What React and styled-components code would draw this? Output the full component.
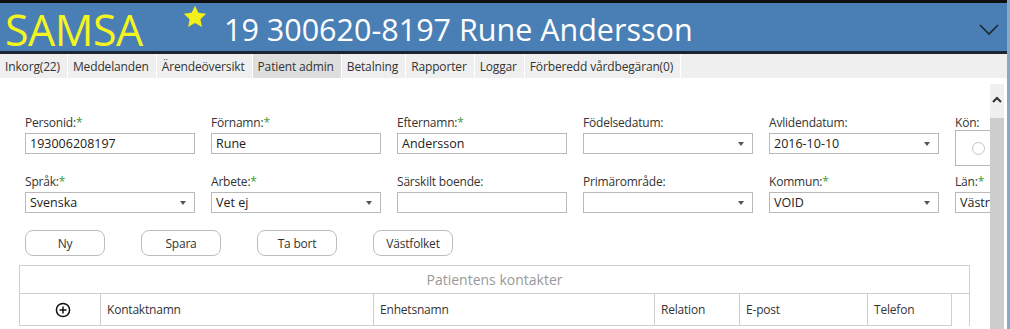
import React from 'react'
import styled, { createGlobalStyle } from 'styled-components'

const Global = createGlobalStyle`
  html, body { margin: 0; padding: 0; background: #fff; }
  body { font-family: "Open Sans", "Noto Sans", sans-serif; }
  * { box-sizing: border-box; }
`

const Frame = styled.div`
  width: 1010px;
  height: 329px;
  overflow: hidden;
  border-right: 3px solid #8aa7cc;
  display: flex;
  flex-direction: column;
`

const Header = styled.header`
  height: 54px;
  background: #4a7fb5;
  border-top: 3px solid #101010;
  border-bottom: 3px solid #1b2430;
  display: flex;
  align-items: center;
  padding-left: 5px;
  padding-right: 8px;
`

const Logo = styled.div`
  color: #f4f41e;
  font-family: "Open Sans", sans-serif;
  font-size: 43px;
  letter-spacing: -0.5px;
  line-height: 1;
  margin-top: 4px;
  width: 177px;
`

const Star = styled.svg`
  width: 26px;
  height: 26px;
  align-self: flex-start;
  margin-top: 1px;
  margin-right: 16px;
`

const PatientName = styled.div`
  color: #fff;
  font-family: "Open Sans", sans-serif;
  font-size: 30.5px;
  line-height: 1;
  margin-top: 4px;
  flex: 1;
`

const Chevron = styled.svg`
  width: 20px;
  height: 12px;
  margin-top: 6px;
`

const TabBar = styled.nav`
  height: 24px;
  background: #efefef;
  display: flex;
  align-items: stretch;
`

const Tab = styled.div`
  font-size: 12px;
  color: #333;
  padding: 0 7px 0 5px;
  display: flex;
  align-items: center;
  border-right: 1px solid #fff;
  letter-spacing: -0.15px;
  background: ${p => (p.$active ? '#dedede' : 'transparent')};
`

const Body = styled.div`
  flex: 1;
  display: flex;
  min-height: 0;
`

const Main = styled.main`
  flex: 1;
  overflow: hidden;
  padding: 36px 0 0 19px;
`

const ScrollBar = styled.div`
  width: 17px;
  margin-top: 6px;
  display: flex;
  flex-direction: column;
`

const ScrollUp = styled.div`
  height: 34px;
  width: 14px;
  background: #f0f0f0;
  display: flex;
  justify-content: center;
  padding-top: 12px;
`

const Thumb = styled.div`
  flex: 1;
  width: 14px;
  background: #cdcdcd;
`

const FormGrid = styled.div`
  display: grid;
  grid-template-columns: repeat(6, 170px);
  column-gap: 16px;
  row-gap: 19px;
  padding-left: 6px;
  width: 1100px;
`

const Field = styled.div`
  display: flex;
  flex-direction: column;
`

const Label = styled.label`
  font-size: 12px;
  color: #333;
  height: 17px;
  line-height: 17px;
  margin-bottom: 2px;
  letter-spacing: -0.2px;
`

const Req = styled.span`
  color: #3c9a3c;
`

const Input = styled.div`
  height: 21px;
  border: 1px solid #b9b9b9;
  background: #fff;
  font-size: 12.5px;
  color: #222;
  padding: 0 8px 0 4px;
  display: flex;
  align-items: center;
  justify-content: space-between;
  white-space: nowrap;
  overflow: hidden;
`

const Caret = styled.span`
  width: 0;
  height: 0;
  border-left: 3.5px solid transparent;
  border-right: 3.5px solid transparent;
  border-top: 4px solid #555;
`

const RadioBox = styled.div`
  height: 36px;
  margin-top: -3px;
  margin-bottom: -12px;
  border: 1px solid #b9b9b9;
  display: flex;
  align-items: center;
  padding-left: 16px;
`

const Radio = styled.span`
  width: 13px;
  height: 13px;
  border: 1.5px solid #c4c4c4;
  border-radius: 50%;
`

const Buttons = styled.div`
  display: flex;
  gap: 36px;
  padding-left: 6px;
  margin-top: 17px;
`

const Button = styled.button`
  width: 80px;
  height: 26px;
  border: 1px solid #bdbdbd;
  border-radius: 8px;
  background: #fff;
  font-family: inherit;
  font-size: 12px;
  color: #333;
  letter-spacing: -0.2px;
`

const Panel = styled.section`
  width: 951px;
  margin-top: 9px;
  border: 1px solid #cfcfcf;
  border-bottom: none;
`

const PanelTitle = styled.div`
  height: 28px;
  display: flex;
  align-items: center;
  justify-content: center;
  font-size: 14px;
  color: #999;
  border-bottom: 1px solid #cfcfcf;
`

const HeadRow = styled.div`
  display: grid;
  grid-template-columns: 80px 273px 281px 85px 128px 85px;
  width: 932px;
  height: 32px;
  border-bottom: 1px solid #cfcfcf;
  border-right: 1px solid #cfcfcf;
`

const HeadCell = styled.div`
  font-size: 12px;
  color: #333;
  display: flex;
  align-items: center;
  justify-content: ${p => (p.$center ? 'center' : 'flex-start')};
  padding-left: 6px;
  border-left: ${p => (p.$first ? 'none' : '1px solid #cfcfcf')};
  letter-spacing: -0.2px;
`

const fieldsRow1 = [
  { label: 'Personid:', req: true, value: '193006208197' },
  { label: 'Förnamn:', req: true, value: 'Rune' },
  { label: 'Efternamn:', req: true, value: 'Andersson' },
  { label: 'Födelsedatum:', value: '', select: true },
  { label: 'Avlidendatum:', value: '2016-10-10', select: true },
]

const fieldsRow2 = [
  { label: 'Språk:', req: true, value: 'Svenska', select: true },
  { label: 'Arbete:', req: true, value: 'Vet ej', select: true },
  { label: 'Särskilt boende:', value: '' },
  { label: 'Primärområde:', value: '', select: true },
  { label: 'Kommun:', req: true, value: 'VOID', select: true },
  { label: 'Län:', req: true, value: 'Västra Götaland' },
]

const tabs = ['Inkorg(22)', 'Meddelanden', 'Ärendeöversikt', 'Patient admin', 'Betalning', 'Rapporter', 'Loggar', 'Förberedd vårdbegäran(0)']

const renderField = f => (
  <Field key={f.label}>
    <Label>
      {f.label}
      {f.req && <Req>*</Req>}
    </Label>
    <Input>
      <span>{f.value}</span>
      {f.select && <Caret />}
    </Input>
  </Field>
)

export default function App() {
  return (
    <Frame>
      <Global />
      <Header>
        <Logo>SAMSA</Logo>
        <Star viewBox="0 0 24 24">
          <path d="M12 1.5l3.1 6.6 7.2.9-5.3 5 1.4 7.2L12 17.6l-6.4 3.6 1.4-7.2-5.3-5 7.2-.9z" fill="#f2ef1a" />
        </Star>
        <PatientName>19 300620-8197 Rune Andersson</PatientName>
        <Chevron viewBox="0 0 20 12">
          <path d="M1 1l9 9 9-9" fill="none" stroke="#1d2733" strokeWidth="1.6" />
        </Chevron>
      </Header>
      <TabBar>
        {tabs.map(t => (
          <Tab key={t} $active={t === 'Patient admin'}>{t}</Tab>
        ))}
      </TabBar>
      <Body>
        <Main>
          <FormGrid>
            {fieldsRow1.map(renderField)}
            <Field>
              <Label>Kön:</Label>
              <RadioBox>
                <Radio />
              </RadioBox>
            </Field>
            {fieldsRow2.map(renderField)}
          </FormGrid>
          <Buttons>
            <Button>Ny</Button>
            <Button>Spara</Button>
            <Button>Ta bort</Button>
            <Button>Västfolket</Button>
          </Buttons>
          <Panel>
            <PanelTitle>Patientens kontakter</PanelTitle>
            <HeadRow>
              <HeadCell $first $center>
                <svg width="16" height="16" viewBox="0 0 16 16">
                  <circle cx="8" cy="8" r="6.6" fill="none" stroke="#111" strokeWidth="1.5" />
                  <path d="M8 4.5v7M4.5 8h7" stroke="#111" strokeWidth="1.5" />
                </svg>
              </HeadCell>
              <HeadCell>Kontaktnamn</HeadCell>
              <HeadCell>Enhetsnamn</HeadCell>
              <HeadCell>Relation</HeadCell>
              <HeadCell>E-post</HeadCell>
              <HeadCell>Telefon</HeadCell>
            </HeadRow>
          </Panel>
        </Main>
        <ScrollBar>
          <ScrollUp>
            <svg width="10" height="7" viewBox="0 0 10 7">
              <path d="M1 6l4-4 4 4" fill="none" stroke="#333" strokeWidth="2" />
            </svg>
          </ScrollUp>
          <Thumb />
        </ScrollBar>
      </Body>
    </Frame>
  )
}
